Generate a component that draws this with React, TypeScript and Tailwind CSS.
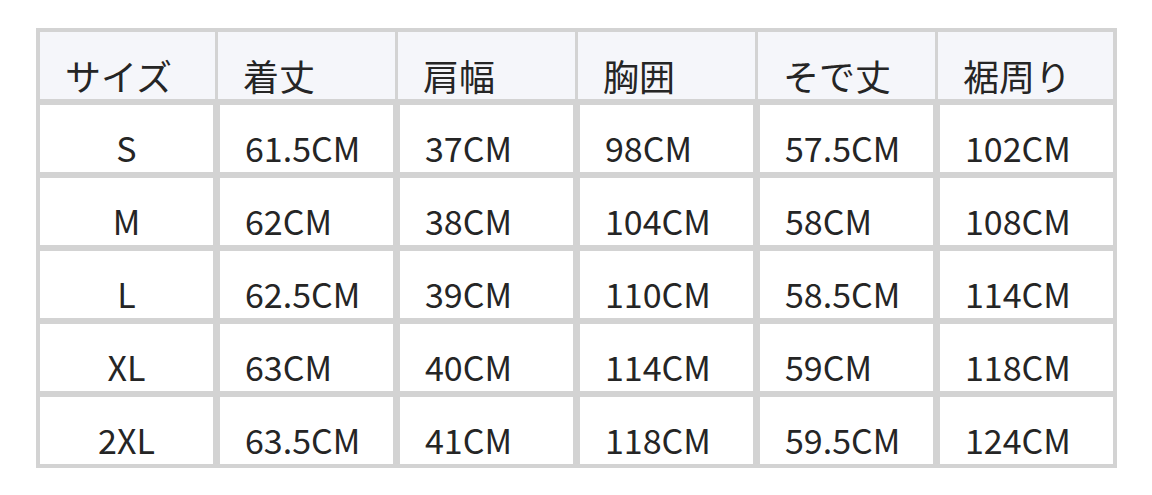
const headers = ["サイズ", "着丈", "肩幅", "胸囲", "そで丈", "裾周り"];

const rows = [
  ["S", "61.5CM", "37CM", "98CM", "57.5CM", "102CM"],
  ["M", "62CM", "38CM", "104CM", "58CM", "108CM"],
  ["L", "62.5CM", "39CM", "110CM", "58.5CM", "114CM"],
  ["XL", "63CM", "40CM", "114CM", "59CM", "118CM"],
  ["2XL", "63.5CM", "41CM", "118CM", "59.5CM", "124CM"],
];

const font = { fontFamily: '"Noto Sans CJK JP", "Noto Sans", sans-serif' };

export default function App() {
  return (
    <div className="h-[495px] w-[1152px] bg-white pl-[36px] pt-[28px]" style={font}>
      <div className="flex w-[1081px] flex-col gap-y-[6px] border-4 border-[#d3d3d3] bg-[#d3d3d3] text-[#252525]">
        {/* header row */}
        <div className="grid h-[67px] grid-cols-[175px_177px_177px_177px_177px_175px] gap-x-[3px] text-[36px] leading-[36px]">
          {headers.map((h) => (
            <div className="bg-[#f5f6fa] pl-[25px] pt-[25px]" key={h}>
              {h}
            </div>
          ))}
        </div>

        {rows.map((row) => (
          <div className="grid h-[67px] grid-cols-6 gap-x-[7px] text-[34px] leading-[34px]" key={row[0]}>
            {row.map((cell, i) => (
              <div
                className={i === 0 ? "bg-white pt-[26px] text-center" : "bg-white pl-[25px] pt-[26px]"}
                key={i}
              >
                {cell}
              </div>
            ))}
          </div>
        ))}
      </div>
    </div>
  );
}
